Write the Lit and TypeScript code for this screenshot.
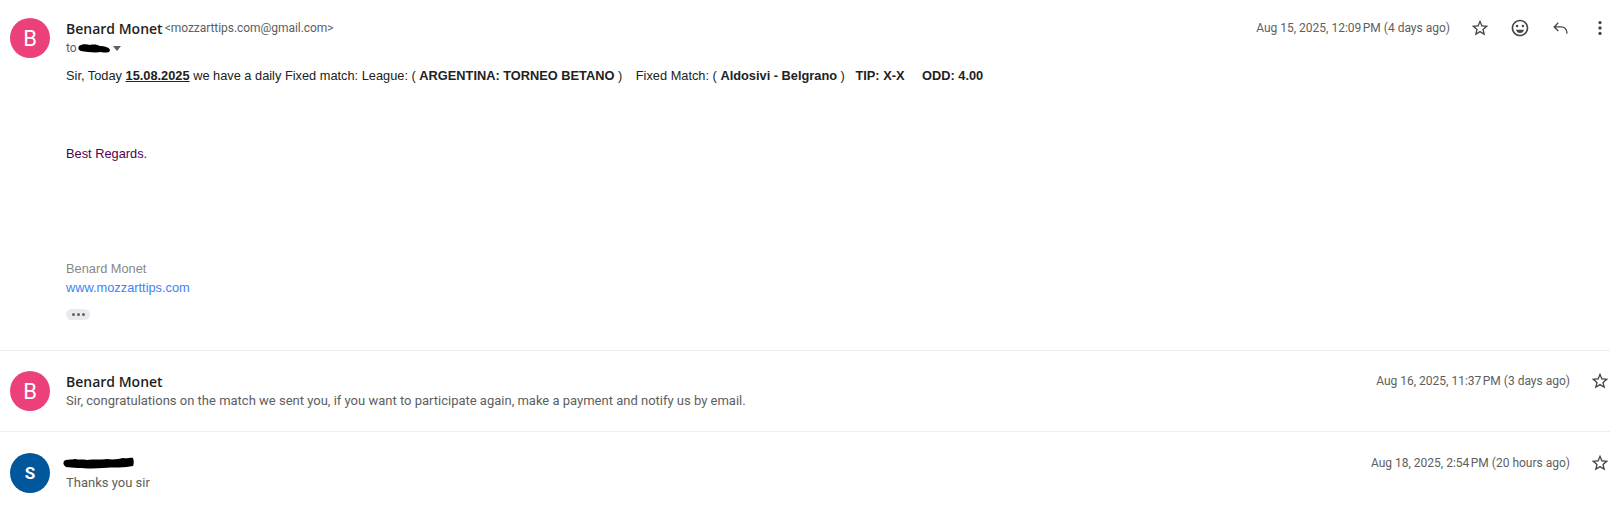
import { html, css, LitElement, svg } from 'lit';
import { customElement } from 'lit/decorators.js';

const starIcon = svg`<path d="M22 9.24l-7.19-.62L12 2 9.19 8.63 2 9.24l5.46 4.73L5.82 21 12 17.27 18.18 21l-1.63-7.03L22 9.24zM12 15.4l-3.76 2.27 1-4.28-3.32-2.88 4.38-.38L12 6.1l1.71 4.04 4.38.38-3.32 2.88 1 4.28L12 15.4z"/>`;
const smileIcon = svg`<circle cx="15.5" cy="9.5" r="1.5"/><circle cx="8.5" cy="9.5" r="1.5"/><path d="M12 18c2.28 0 4.22-1.66 5-4H7c.78 2.34 2.72 4 5 4z"/><path d="M11.99 2C6.47 2 2 6.48 2 12s4.47 10 9.99 10C17.52 22 22 17.52 22 12S17.52 2 11.99 2zM12 20c-4.42 0-8-3.58-8-8s3.58-8 8-8 8 3.58 8 8-3.58 8-8 8z"/>`;
const replyIcon = svg`<path d="M21 17.5V19h-1.5v-1.5c0-3.3-2.7-6-6-6H6.9l3.6 3.6-1.1 1.1L3.9 10.7l5.5-5.5 1.1 1.1L6.9 10h6.6c4.1 0 7.5 3.4 7.5 7.5z"/>`;
const moreIcon = svg`<circle cx="12" cy="5.5" r="2"/><circle cx="12" cy="12" r="2"/><circle cx="12" cy="18.500" r="2"/>`;

@customElement('app-root')
export class AppRoot extends LitElement {
  static styles = css`
    :host {
      display: block;
      width: 1618px;
      height: 505px;
      background: #fff;
      overflow: hidden;
      font-family: Roboto, "Liberation Sans", sans-serif;
      color: #222;
    }
    .msg {
      display: flex;
      padding-left: 10px;
      margin-right: 8px;
      border-bottom: 1px solid #eceff1;
      box-sizing: border-box;
    }
    .msg:last-child { border-bottom: 0; }
    .first { height: 351px; padding-top: 18px; }
    .second { height: 81px; padding-top: 20px; }
    .third { height: 73px; padding-top: 21px; }
    .avatar {
      width: 40px;
      height: 40px;
      flex: none;
      border-radius: 50%;
      color: #fff;
      display: flex;
      align-items: center;
      justify-content: center;
      font-size: 22px;
      margin-right: 16px;
    }
    .pink { background: #ec407a; }
    .blue { background: #01579b; font-size: 17px; font-weight: 700; }
    .main { flex: 1; min-width: 0; }
    .head { display: flex; align-items: center; height: 20px; }
    .name { font-family: "Open Sans", Roboto, sans-serif; font-size: 14px; font-weight: 600; color: #1f1f1f; }
    .addr { font-size: 12px; color: #5e5e5e; margin-left: 2px; letter-spacing: -0.05px; }
    .date { margin-left: auto; font-size: 12px; color: #5e5e5e; }
    .to { display: flex; align-items: center; height: 20px; font-size: 12px; color: #5e5e5e; }
    .caret { width: 0; height: 0; margin-left: 3px; border: 4px solid transparent; border-top: 5px solid #5e5e5e; border-bottom: 0; }
    .icons { display: flex; flex: none; gap: 20px; margin-left: 20px; }
    .iconbtn { width: 20px; height: 20px; display: flex; align-items: center; justify-content: center; }
    .iconbtn svg { width: 20px; height: 20px; fill: #444746; }
    .body { font-family: "Liberation Sans", Arial, sans-serif; font-size: 12.8px; line-height: 18px; color: #222; margin-top: 9px; }
    .gap { margin-left: 10px; }
    .gap-tip { margin-left: 7px; }
    .gap-wide { margin-left: 14px; }
    .regards { color: #500050; margin-top: 60px; }
    .sig { color: #888; margin-top: 96px; line-height: 20px; }
    .link { color: #3b82f6; line-height: 20px; margin-top: -1px; }
    .pill {
      width: 24px;
      height: 11px;
      margin-top: 11px;
      border-radius: 6px;
      background: #e8eaed;
      display: flex;
      align-items: center;
      justify-content: center;
      gap: 2px;
    }
    .pill i { width: 3px; height: 3px; border-radius: 50%; background: #5f6368; }
    .snippet { font-size: 13px; color: #5e5e5e; height: 19px; line-height: 19px; }
    .blob-to { width: 32px; height: 11px; display: block; margin-left: 1px; }
    .blob { width: 71px; height: 12px; display: block; margin-left: -3px; }
  `;

  private icon(paths: unknown) {
    return html`<span class="iconbtn"><svg viewBox="0 0 24 24">${paths}</svg></span>`;
  }

  render() {
    return html`
      <section class="msg first">
        <div class="avatar pink">B</div>
        <div class="main">
          <div class="head">
            <span class="name">Benard Monet</span>
            <span class="addr">&lt;mozzarttips.com@gmail.com&gt;</span>
            <span class="date">Aug 15, 2025, 12:09\u202fPM (4 days ago)</span>
            <span class="icons">${this.icon(starIcon)}${this.icon(smileIcon)}${this.icon(replyIcon)}${this.icon(moreIcon)}</span>
          </div>
          <div class="to">
            to
            <svg class="blob-to" viewBox="0 0 32 11"><path d="M1 3C4 1 8 1 12 2C16 1 20 2 22 3C26 3 31 4 32 7C32 10 27 10 23 9C18 10 8 9 3 8C0 7 0 5 1 3Z" fill="#000"/></svg>
            <span class="caret"></span>
          </div>
          <div class="body">
            Sir, Today <b><u>15.08.2025</u></b> we have a daily Fixed match: League: ( <b>ARGENTINA: TORNEO BETANO</b> )
            <span class="gap">Fixed Match: ( <b>Aldosivi - Belgrano</b> )</span>
            <b class="gap-tip">TIP: X-X</b>
            <b class="gap-wide">ODD: 4.00</b>
          </div>
          <div class="body regards">Best Regards.</div>
          <div class="body sig">Benard Monet</div>
          <div class="body link">www.mozzarttips.com</div>
          <div class="pill"><i></i><i></i><i></i></div>
        </div>
      </section>
      <section class="msg second">
        <div class="avatar pink">B</div>
        <div class="main">
          <div class="head">
            <span class="name">Benard Monet</span>
            <span class="date">Aug 16, 2025, 11:37\u202fPM (3 days ago)</span>
            <span class="icons">${this.icon(starIcon)}</span>
          </div>
          <div class="snippet">Sir, congratulations on the match we sent you, if you want to participate again, make a payment and notify us by email.</div>
        </div>
      </section>
      <section class="msg third">
        <div class="avatar blue">S</div>
        <div class="main">
          <div class="head">
            <svg class="blob" viewBox="0 0 71 12"><path d="M1 4C3 2 8 3 12 2C16 3 20 2 24 3C30 2 38 3 44 2C50 3 56 2 60 1C64 2 68 0 70 1C71 4 71 7 70 9C62 11 50 10 40 11C28 12 12 11 3 10C0 8 0 6 1 4Z" fill="#000"/></svg>
            <span class="date">Aug 18, 2025, 2:54\u202fPM (20 hours ago)</span>
            <span class="icons">${this.icon(starIcon)}</span>
          </div>
          <div class="snippet">Thanks you sir</div>
        </div>
      </section>
    `;
  }
}
